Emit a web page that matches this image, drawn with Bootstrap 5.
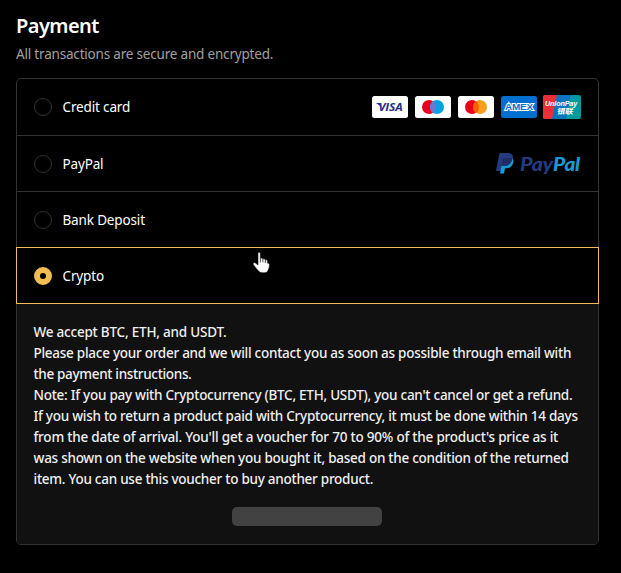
<!DOCTYPE html>
<html lang="en">
<head>
<meta charset="utf-8">
<meta name="viewport" content="width=device-width, initial-scale=1">
<title>Payment</title>
<link href="https://cdn.jsdelivr.net/npm/bootstrap@5.3.0/dist/css/bootstrap.min.css" rel="stylesheet">
<style>
body{background:#000;color:#fff;font-family:"Noto Sans","Open Sans",sans-serif;font-size:13.5px;line-height:21px;overflow:hidden}
.checkout{width:583px;margin:0 0 0 16px;padding-top:13px}
.heading{font-size:20px;line-height:26px;font-weight:600;letter-spacing:-.55px}
.subline{color:#a0a0a0;line-height:20px;margin:5px 0 14px;letter-spacing:-.19px}
.methods{border:1px solid #333;border-radius:5px;height:467px}
.method{height:56px;padding:0 17px;border-bottom:1px solid #333;cursor:pointer;letter-spacing:-.15px}
.method:first-child{height:57px}
.method.before-chosen{height:55px;border-bottom:0}
.method.chosen{height:57px;margin:0 -1px;padding:0 17px;border:1px solid #f3bd55}
.method + .method > span{padding-top:2px}
.dot{width:18px;height:18px;border:1px solid #333;border-radius:50%;margin-right:10.5px;flex:none}
.chosen .dot{border:6px solid #f3bd55}
.details{background:#111;height:240px;padding:18px 17px 0 16.5px;border-radius:0 0 4px 4px;color:#f0f0f0;font-weight:500;letter-spacing:-.26px}
.details span{display:block;white-space:nowrap}
.details .loose{letter-spacing:-.21px}
.details .tight{letter-spacing:-.33px}
.placeholder-bar{width:150px;height:19px;border-radius:5px;background:#424242;margin:17px 0 0 198.5px}
.brands{gap:5px}
.brands svg{display:block}
.pointer{position:absolute;left:252px;top:251px}
</style>
</head>
<body>
<main class="checkout">
<h2 class="heading mb-0">Payment</h2>
<p class="subline">All transactions are secure and encrypted.</p>
<div class="methods">
<label class="method d-flex align-items-center"><i class="dot"></i><span>Credit card</span>
<div class="brands d-flex ms-auto">
<svg width="38" height="24" viewBox="0 0 38 24"><rect x="1" y="1" width="36" height="22" rx="2.500" fill="#fff"/><text x="7.500" y="16" font-family="Open Sans, sans-serif" font-style="italic" font-weight="700" font-size="11" textLength="24" lengthAdjust="spacingAndGlyphs" fill="#1f2f8a">VISA</text><path d="M5 8h4l1.500 4z" fill="#1f2f8a"/></svg>
<svg width="38" height="24" viewBox="0 0 38 24"><rect x="1" y="1" width="36" height="22" rx="2.500" fill="#fff"/><circle cx="15" cy="12" r="7" fill="#eb001b"/><circle cx="23" cy="12" r="7" fill="#00a2e5"/><path d="M19 6.300a7 7 0 0 1 0 11.400 7 7 0 0 1 0-11.400z" fill="#7375cf"/></svg>
<svg width="38" height="24" viewBox="0 0 38 24"><rect x="1" y="1" width="36" height="22" rx="2.500" fill="#fff"/><circle cx="15" cy="12" r="7" fill="#eb001b"/><circle cx="23" cy="12" r="7" fill="#f79e1b"/><path d="M19 6.300a7 7 0 0 1 0 11.400 7 7 0 0 1 0-11.400z" fill="#ff5f00"/></svg>
<svg width="38" height="24" viewBox="0 0 38 24"><rect x="1" y="1" width="36" height="22" rx="2.500" fill="#006fcf"/><text x="5" y="15.300" font-family="Liberation Sans, sans-serif" font-weight="700" font-size="9" textLength="28" lengthAdjust="spacingAndGlyphs" fill="#006fcf" stroke="#fff" stroke-width="2" paint-order="stroke">AMEX</text></svg>
<svg width="38" height="24" viewBox="0 0 38 24"><rect width="38" height="24" rx="2.500" fill="#00999e"/><path d="M2.500 0H28l-5 24H2.500A2.500 2.500 0 0 1 0 21.500v-19A2.500 2.500 0 0 1 2.500 0z" fill="#0875bd"/><path d="M2.500 0H14L9 24H2.500A2.500 2.500 0 0 1 0 21.500v-19A2.500 2.500 0 0 1 2.500 0z" fill="#ec2f37"/><text x="2" y="11" font-family="Liberation Sans, sans-serif" font-style="italic" font-weight="700" font-size="7.500" textLength="32" lengthAdjust="spacingAndGlyphs" fill="#fff">UnionPay</text><text x="13.500" y="18.700" font-family="Noto Sans CJK SC, sans-serif" font-weight="700" font-size="7.500" textLength="16" lengthAdjust="spacingAndGlyphs" fill="#fff" transform="translate(3.500) skewX(-10)">银联</text></svg>
</div></label>
<label class="method d-flex align-items-center"><i class="dot"></i><span>PayPal</span>
<svg class="ms-auto" width="86" height="24" viewBox="0 0 86 24"><path d="M4.500 1h8.500c4 0 5.500 2.200 4.700 6-.7 4-3.500 6-7.500 6H7L5.700 19H1z" fill="#253b80"/><path d="M17.300 6.500c1 1.200 1.300 2.500.9 4.300-.8 3.600-3.200 5.400-6.700 5.400h-1.500L9 21.500H5l1.500-8h3.200c4 0 6.900-2 7.600-7z" fill="#179bd7"/><path d="M8 6h7.500c.8 0 1.400.3 1.800.6-.8 4.200-3.400 6.900-7.600 6.900H6.500z" fill="#222d65"/><text x="25" y="18.500" font-family="Lato, sans-serif" font-style="italic" font-weight="900" font-size="18" textLength="33" lengthAdjust="spacingAndGlyphs" fill="#253b80">Pay</text><text x="58" y="18.500" font-family="Lato, sans-serif" font-style="italic" font-weight="900" font-size="18" textLength="27" lengthAdjust="spacingAndGlyphs" fill="#179bd7">Pal</text></svg></label>
<label class="method before-chosen d-flex align-items-center"><i class="dot"></i><span>Bank Deposit</span></label>
<label class="method chosen d-flex align-items-center"><i class="dot"></i><span>Crypto</span></label>
<div class="details">
<span class="loose">We accept BTC, ETH, and USDT.</span>
<span>Please place your order and we will contact you as soon as possible through email with</span>
<span class="tight">the payment instructions.</span>
<span>Note: If you pay with Cryptocurrency (BTC, ETH, USDT), you can't cancel or get a refund.</span>
<span>If you wish to return a product paid with Cryptocurrency, it must be done within 14 days</span>
<span class="loose">from the date of arrival. You'll get a voucher for 70 to 90% of the product's price as it</span>
<span>was shown on the website when you bought it, based on the condition of the returned</span>
<span>item. You can use this voucher to buy another product.</span>
<div class="placeholder-bar"></div>
</div>
</div>
</main>
<svg class="pointer" width="19" height="24" viewBox="0 0 19 24"><path d="M6 2.500C6 .8 8.300.8 8.300 2.500V7.500c.8-.8 2.300-.5 2.500.6.800-.7 2.200-.3 2.400.8 1-.5 2.400 0 2.400 1.300v2c1.300-.2 1.900.4 1.900 1.300 0 3.500-1.200 5.500-2.500 7.500-.5 1-6.500 1-7.500 0C5.500 19 3 16 1.300 13.500c-.7-1.500 1-2.400 2.200-1.400L6 14z" fill="#fff" stroke="#111" stroke-width=".6"/><path d="M8.400 7.500v4M10.900 8v3.500M13.300 9v3" stroke="#111" stroke-width=".7"/></svg>
<script src="https://cdn.jsdelivr.net/npm/bootstrap@5.3.0/dist/js/bootstrap.bundle.min.js"></script>
</body>
</html>
